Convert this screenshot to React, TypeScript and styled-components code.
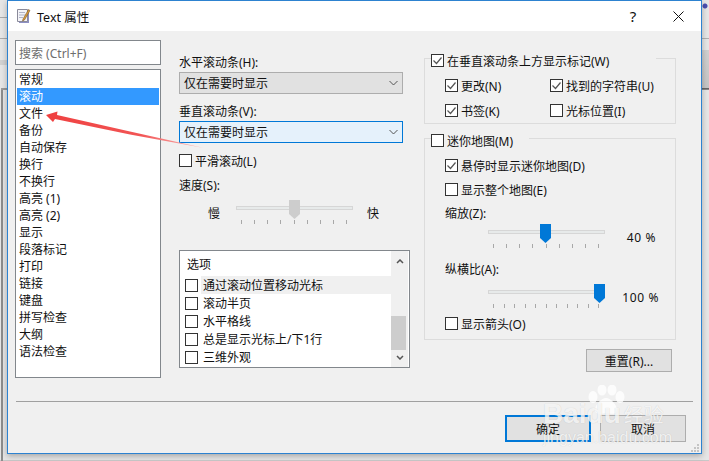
import React from "react";
import styled, { createGlobalStyle } from "styled-components";

const Global = createGlobalStyle`
  html, body { margin: 0; padding: 0; width: 709px; height: 461px; overflow: hidden; background: #e4e4e4; }
  * { box-sizing: border-box; }
`;

// what peeks out behind the dialog: editor chrome on the left and right edges
const Desktop = styled.div`
  width: 709px;
  height: 461px;
  padding-left: 7px;
  overflow: hidden;
  font-family: "Noto Sans", "Noto Sans CJK SC", sans-serif;
  font-size: 12px;
  color: #111;
  background-color: #e6e6e6;
  background-repeat: no-repeat;
  background-image:
    radial-gradient(circle at 3px 3px, #4a4fb0 0 2px, transparent 3px),
    linear-gradient(#b0b0b0, #b0b0b0),
    linear-gradient(#d0d0d0, #c4c4c4),
    linear-gradient(#555, #999),
    linear-gradient(#8c8c8c, #8c8c8c),
    linear-gradient(#9a9a9a, #9a9a9a),
    linear-gradient(#aaa, #aaa),
    linear-gradient(#aaa, #aaa),
    linear-gradient(#d2d2d2, #d2d2d2),
    linear-gradient(#c8c8c8, #c8c8c8);
  background-size:
    7px 7px, 7px 1px, 7px 38px, 7px 2px,
    2px 371px, 6px 2px, 7px 1px, 7px 1px,
    7px 5px, 709px 1px;
  background-position:
    702px 3px, 702px 38px, 702px 50px, 702px 88px,
    1px 90px, 1px 88px, 0 17px, 0 38px,
    0 60px, 0 460px;
`;

const Win = styled.div`
  width: 695px;
  height: 454px;
  border: 1px solid #2d82d0;
  background: #f0f0f0;
  display: flex;
  flex-direction: column;
  position: relative;
  box-shadow: 0 2px 6px rgba(0, 0, 0, 0.28);
`;

const TitleBar = styled.div`
  height: 30px;
  flex: none;
  background: #fff;
  display: flex;
  align-items: center;
  padding-left: 8px;
  font-size: 12.5px;
`;

const TitleText = styled.span`
  margin-left: 5px;
`;

const HelpButton = styled.span`
  margin-left: auto;
  margin-right: 5px;
  width: 40px;
  text-align: center;
  font-size: 15px;
`;

const CloseButton = styled.span`
  width: 40px;
  margin-right: 3px;
  display: flex;
  justify-content: center;
`;

const Body = styled.div`
  height: 370px;
  flex: none;
  display: flex;
  padding: 9px 0 0 7px;
`;

const Nav = styled.div`
  width: 146px;
  flex: none;
  display: flex;
  flex-direction: column;
  gap: 4px;
`;

const Search = styled.div`
  height: 25px;
  border: 1px solid #82878c;
  background: #fff;
  color: #6d6d6d;
  padding: 0 3px;
  display: flex;
  align-items: center;
`;

const NavList = styled.div`
  height: 309px;
  border: 1px solid #82878c;
  background: #fff;
  padding: 1px;
`;

const NavItem = styled.div<{ $active?: boolean }>`
  height: 17px;
  line-height: 17px;
  padding-left: 2px;
  background: ${(p) => (p.$active ? "#3399ff" : "transparent")};
  color: ${(p) => (p.$active ? "#fff" : "#111")};
`;

const Middle = styled.div`
  width: 231px;
  margin-left: 18px;
  flex: none;
  display: flex;
  flex-direction: column;
  padding-top: 14px;
`;

const Label = styled.div<{ $mt?: number }>`
  height: 17px;
  line-height: 17px;
  margin-top: ${(p) => p.$mt ?? 0}px;
`;

const SelectBox = styled.div<{ $focus?: boolean }>`
  height: 22px;
  margin: 1px 0 9px;
  width: 224px;
  border: 1px solid ${(p) => (p.$focus ? "#0078d7" : "#adadad")};
  background: ${(p) => (p.$focus ? "#e5f1fb" : "#e1e1e1")};
  padding: 0 4px;
  display: flex;
  align-items: center;
  justify-content: space-between;
`;

const Check = styled.label`
  display: flex;
  align-items: center;
  height: 17px;
  gap: 3px;
  white-space: nowrap;
`;

const Box = styled.span`
  width: 13px;
  height: 13px;
  flex: none;
  border: 1px solid #333;
  background: #fff;
  display: flex;
  align-items: center;
  justify-content: center;
`;

const SpeedRow = styled.div`
  display: flex;
  height: 30px;
  width: 224px;
  margin-top: 6px;
`;

const SpeedSlow = styled.span`
  width: 57px;
  padding: 5px 0 0 29px;
  line-height: 17px;
`;

const SpeedFast = styled.span`
  margin-left: 14px;
  padding-top: 5px;
  line-height: 17px;
`;

const ZoomRow = styled.div<{ $mt: number }>`
  display: flex;
  height: 30px;
  margin-left: 43px;
  margin-top: ${(p) => p.$mt}px;
`;

const Track = styled.div`
  width: 117px;
  height: 26px;
  position: relative;
  flex: none;
`;

const Rail = styled.div`
  position: absolute;
  left: 0;
  right: 0;
  top: 6px;
  height: 4px;
  background: #e7eaea;
  border: 1px solid #d6d6d6;
`;

const Thumb = styled.svg<{ $left: number }>`
  position: absolute;
  top: 0;
  left: ${(p) => p.$left}px;
`;

const Ticks = styled.div`
  position: absolute;
  left: 5px;
  right: 6px;
  top: 20px;
  display: flex;
  justify-content: space-between;
`;

const Tick = styled.i`
  width: 1px;
  height: 4px;
  background: #a8a8a8;
`;

const Spacer = styled.div`
  height: 20px;
  flex: none;
`;

const OptionList = styled.div`
  width: 231px;
  height: 118px;
  border: 1px solid #82878c;
  background: #fff;
  position: relative;
`;

const OptionHead = styled.div`
  height: 25px;
  line-height: 27px;
  padding-left: 7px;
`;

const OptionRow = styled.div<{ $hot?: boolean }>`
  height: 18px;
  display: flex;
  align-items: center;
  width: 211px;
  padding-left: 5px;
  gap: 5px;
  background: ${(p) => (p.$hot ? "linear-gradient(90deg, #fff 21px, #f0f0f0 21px)" : "transparent")};
`;

const ScrollBar = styled.div`
  position: absolute;
  right: 1px;
  top: 0;
  bottom: 0;
  width: 17px;
  background: #f0f0f0;
  display: flex;
  flex-direction: column;
  justify-content: space-between;
  align-items: center;
  padding: 8px 0 7px;
`;

const ScrollThumb = styled.div`
  position: absolute;
  left: 0;
  right: 2px;
  bottom: 17px;
  height: 34px;
  background: #cdcdcd;
`;

const Right = styled.div`
  flex: none;
  width: 252px;
  margin-left: 14px;
  display: flex;
  flex-direction: column;
  gap: 14px;
  padding-top: 18px;
`;

const Group = styled.div<{ $height: number; $titleWidth: number }>`
  height: ${(p) => p.$height}px;
  flex: none;
  border: 1px solid #dcdcdc;
  position: relative;
  padding: 18px 10px 0 20px;

  &::before {
    content: "";
    position: absolute;
    top: -1px;
    left: 6px;
    width: ${(p) => p.$titleWidth}px;
    height: 1px;
    background: #f0f0f0;
  }
`;

const GroupTitle = styled.div`
  position: absolute;
  top: -7px;
  left: 6px;
`;

const CheckGrid = styled.div`
  display: grid;
  grid-template-columns: 105px 1fr;
  row-gap: 8px;
`;

const Stack = styled.div`
  display: flex;
  flex-direction: column;
  gap: 7px;
`;

const CheckOffset = styled.div`
  margin-top: -6px;
`;

const Percent = styled.span<{ $width: number }>`
  width: ${(p) => p.$width}px;
  text-align: right;
  padding-top: 5px;
  line-height: 17px;
  letter-spacing: 0.6px;
`;

const ResetRow = styled.div`
  display: flex;
  justify-content: flex-end;
  margin-top: -5px;
  padding-right: 4px;
`;

const Btn = styled.button<{ $primary?: boolean; $small?: boolean }>`
  width: 86px;
  height: ${(p) => (p.$small ? "23px" : "27px")};
  border: ${(p) => (p.$primary ? "2px solid #0078d7" : "1px solid #adadad")};
  background: #e1e1e1;
  font: inherit;
  color: #111;
  padding: 0;
`;

const Divider = styled.div`
  height: 1px;
  flex: none;
  margin: 0 8px;
  background: #a0a0a0;
`;

const Footer = styled.div`
  flex: 1;
  display: flex;
  justify-content: flex-end;
  gap: 9px;
  padding: 13px 15px 0 0;
`;

const Grip = styled.svg`
  position: absolute;
  right: 2px;
  bottom: 1px;
`;

const Arrow = styled.svg`
  position: absolute;
  left: 32px;
  top: 104px;
  pointer-events: none;
`;

const Watermark = styled.div`
  position: absolute;
  left: 535px;
  top: 384px;
  width: 130px;
  color: rgba(255, 255, 255, 0.8);
  font-family: "Liberation Sans", "Noto Sans CJK SC", sans-serif;
  text-shadow: 0 0 1px rgba(0, 0, 0, 0.18);
  pointer-events: none;
`;

const Paw = styled.svg`
  display: block;
  margin-left: 44px;
`;

const WatermarkRow = styled.div`
  display: flex;
  align-items: center;
  margin-top: -14px;
  height: 26px;
`;

const WatermarkBrand = styled.span`
  font-size: 28px;
  font-weight: bold;
`;

const WatermarkCn = styled.span`
  font-size: 20px;
  margin-left: 3px;
`;

const WatermarkUrl = styled.div`
  font-size: 16px;
  line-height: 18px;
  margin-top: 2px;
`;

const Chevron = () => (
  <svg width="9" height="6" viewBox="0 0 9 6">
    <path d="M.5 1l4 4 4-4" fill="none" stroke="#555" />
  </svg>
);

const Tickmark = () => (
  <svg width="11" height="11" viewBox="0 0 11 11">
    <path d="M1.500 5.500l3 3 5-6" fill="none" stroke="#555" strokeWidth="1.2" />
  </svg>
);

const CheckItem = ({ on, children }: { on?: boolean; children: React.ReactNode }) => (
  <Check>
    <Box>{on && <Tickmark />}</Box>
    <span>{children}</span>
  </Check>
);

const Slider = ({ pos, ticks, color }: { pos: number; ticks: number; color: string }) => (
  <Track>
    <Rail />
    <Thumb $left={pos} width="11" height="19" viewBox="0 0 11 19">
      <path d="M0 0h11v14l-5.500 5L0 14z" fill={color} />
    </Thumb>
    <Ticks>
      {Array.from({ length: ticks }).map((_, i) => (
        <Tick key={i} />
      ))}
    </Ticks>
  </Track>
);

const navItems = ["常规", "滚动", "文件", "备份", "自动保存", "换行", "不换行", "高亮 (1)", "高亮 (2)", "显示", "段落标记", "打印", "链接", "键盘", "拼写检查", "大纲", "语法检查"];
const options = ["通过滚动位置移动光标", "滚动半页", "水平格线", "总是显示光标上/下1行", "三维外观"];

export default function App() {
  return (
    <Desktop>
      <Global />
      <Win>
        <TitleBar>
          <svg width="16" height="16" viewBox="0 0 16 16">
            <path d="M3 3h10v12H3z" fill="#8d8fc4" />
            <path d="M1.500 1.500h10v12h-10z" fill="#f4f4f8" stroke="#8a8a9a" />
            <path d="M3 4.500h6M3 7h6M3 9.500h4" stroke="#b0b4c8" />
            <path d="M7 11l5.500-9.500 1.500 1-5.500 9.500-2 1z" fill="#d99a3a" stroke="#6a4a20" strokeWidth=".5" />
          </svg>
          <TitleText>Text 属性</TitleText>
          <HelpButton>?</HelpButton>
          <CloseButton>
            <svg width="11" height="11" viewBox="0 0 11 11">
              <path d="M.5.5l10 10M10.500.5l-10 10" stroke="#111" />
            </svg>
          </CloseButton>
        </TitleBar>
        <Body>
          <Nav>
            <Search>搜索 (Ctrl+F)</Search>
            <NavList>
              {navItems.map((n, i) => (
                <NavItem key={n} $active={i === 1}>{n}</NavItem>
              ))}
            </NavList>
          </Nav>
          <Middle>
            <Label>水平滚动条(H):</Label>
            <SelectBox>仅在需要时显示<Chevron /></SelectBox>
            <Label>垂直滚动条(V):</Label>
            <SelectBox $focus>仅在需要时显示<Chevron /></SelectBox>
            <CheckItem>平滑滚动(L)</CheckItem>
            <Label $mt={8}>速度(S):</Label>
            <SpeedRow>
              <SpeedSlow>慢</SpeedSlow>
              <Slider pos={53} ticks={9} color="#cdcdcd" />
              <SpeedFast>快</SpeedFast>
            </SpeedRow>
            <Spacer />
            <OptionList>
              <OptionHead>选项</OptionHead>
              {options.map((o, i) => (
                <OptionRow key={o} $hot={i === 0}>
                  <Box />
                  <span>{o}</span>
                </OptionRow>
              ))}
              <ScrollBar>
                <svg width="8" height="5" viewBox="0 0 8 5"><path d="M1 4l3-3 3 3" fill="none" stroke="#555" strokeWidth="1.500" /></svg>
                <ScrollThumb />
                <svg width="8" height="5" viewBox="0 0 8 5"><path d="M1 1l3 3 3-3" fill="none" stroke="#555" strokeWidth="1.500" /></svg>
              </ScrollBar>
            </OptionList>
          </Middle>
          <Right>
            <Group $height={66} $titleWidth={225}>
              <GroupTitle><CheckItem on>在垂直滚动条上方显示标记(W)</CheckItem></GroupTitle>
              <CheckGrid>
                <CheckItem on>更改(N)</CheckItem>
                <CheckItem on>找到的字符串(U)</CheckItem>
                <CheckItem on>书签(K)</CheckItem>
                <CheckItem>光标位置(I)</CheckItem>
              </CheckGrid>
            </Group>
            <Group $height={202} $titleWidth={98}>
              <GroupTitle><CheckItem>迷你地图(M)</CheckItem></GroupTitle>
              <Stack>
                <CheckItem on>悬停时显示迷你地图(D)</CheckItem>
                <CheckItem>显示整个地图(E)</CheckItem>
                <Label>缩放(Z):</Label>
                <ZoomRow $mt={-5}>
                  <Slider pos={52} ticks={9} color="#0078d7" />
                  <Percent $width={51}>40 %</Percent>
                </ZoomRow>
                <Label>纵横比(A):</Label>
                <ZoomRow $mt={-1}>
                  <Slider pos={106} ticks={11} color="#0078d7" />
                  <Percent $width={54}>100 %</Percent>
                </ZoomRow>
                <CheckOffset><CheckItem>显示箭头(O)</CheckItem></CheckOffset>
              </Stack>
            </Group>
            <ResetRow><Btn $small>重置(R)...</Btn></ResetRow>
          </Right>
        </Body>
        <Divider />
        <Footer>
          <Btn $primary>确定</Btn>
          <Btn>取消</Btn>
        </Footer>
        <Grip width="8" height="8" viewBox="0 0 8 8">
          <path d="M6 0h2v2H6zM3 3h2v2H3zM6 3h2v2H6zM0 6h2v2H0zM3 6h2v2H3zM6 6h2v2H6z" fill="#c4c4c4" />
        </Grip>
        <Arrow width="175" height="50" viewBox="0 0 175 50">
          <defs>
            <linearGradient id="arrowFade" x1="0" y1="0" x2="1" y2="0">
              <stop offset="0" stopColor="#ef4040" />
              <stop offset="0.6" stopColor="#f25555" />
              <stop offset="1" stopColor="#fbc0c0" />
            </linearGradient>
          </defs>
          <path d="M6 10L17.500 6.500 17 10 90 26.500 164 43 90 29.500 15 14l-2 3z" fill="url(#arrowFade)" />
        </Arrow>
        <Watermark>
          <Paw width="38" height="30" viewBox="0 0 38 30" fill="currentColor">
            <ellipse cx="6" cy="12" rx="4.500" ry="6" />
            <ellipse cx="15" cy="5" rx="4.500" ry="5.500" />
            <ellipse cx="25" cy="5" rx="4.500" ry="5.500" />
            <ellipse cx="33" cy="12" rx="4.500" ry="6" />
            <path d="M19 13c5 0 11 7 11 12 0 5-7 4-11 3-4 1-11 2-11-3 0-5 6-12 11-12z" />
          </Paw>
          <WatermarkRow>
            <WatermarkBrand>Baidu</WatermarkBrand>
            <WatermarkCn>经验</WatermarkCn>
          </WatermarkRow>
          <WatermarkUrl>jingyan.baidu.com</WatermarkUrl>
        </Watermark>
      </Win>
    </Desktop>
  );
}
